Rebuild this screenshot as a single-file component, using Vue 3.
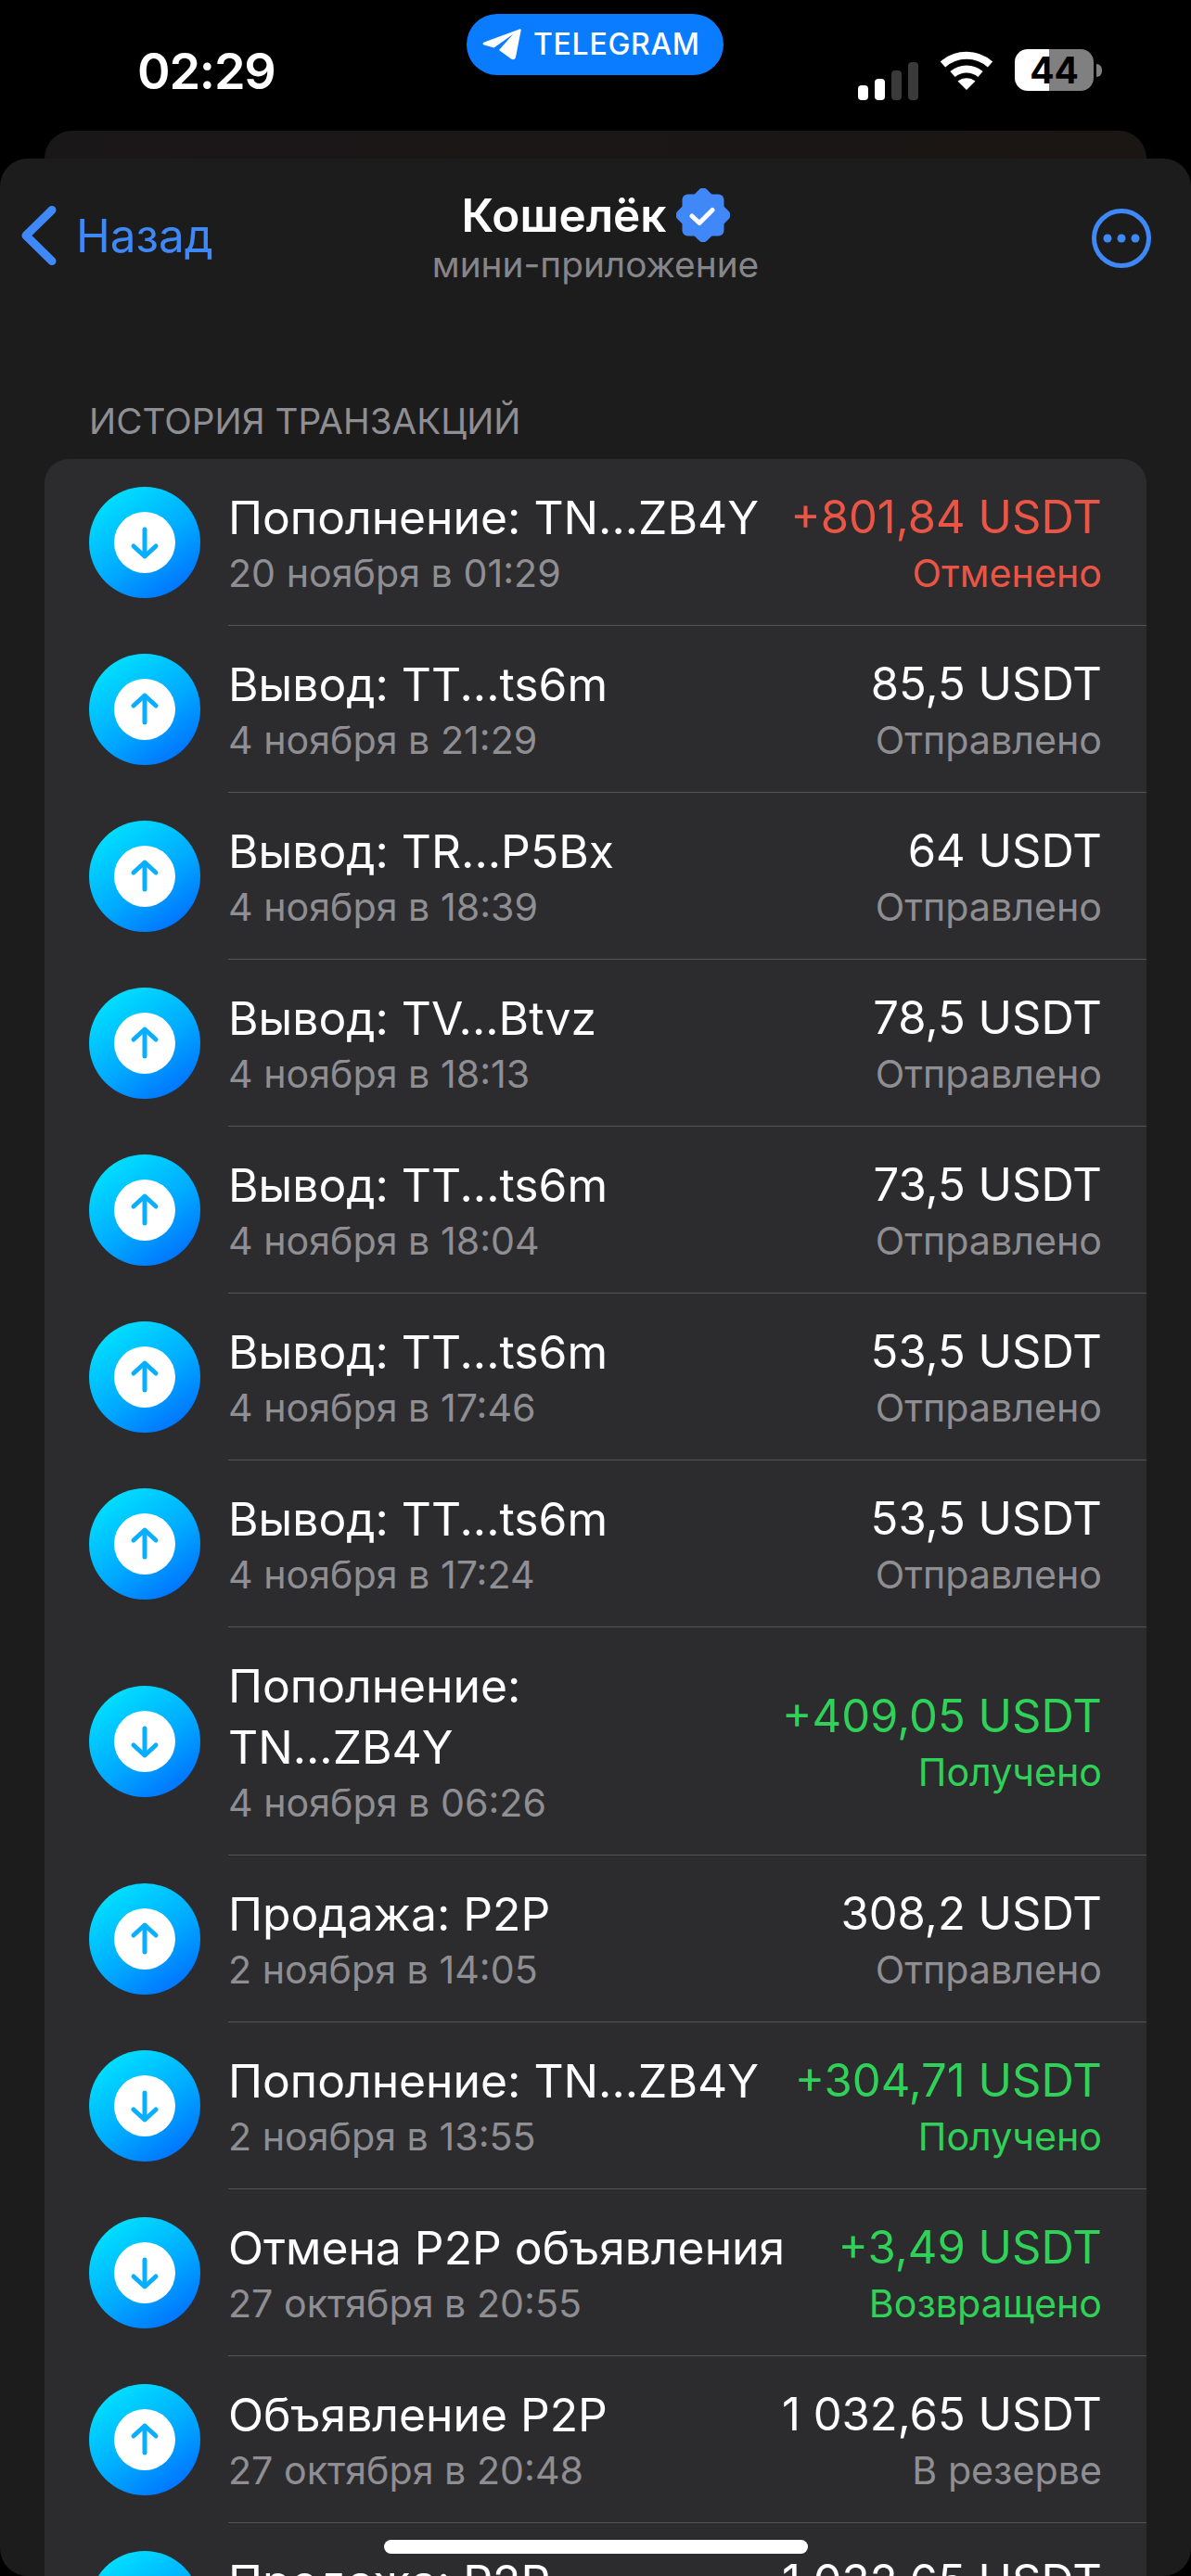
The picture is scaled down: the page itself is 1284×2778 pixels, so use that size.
<script setup>
const rows = [
  { dir: 'down', title: 'Пополнение: TN...ZB4Y', date: '20 ноября в 01:29', amount: '+801,84 USDT', status: 'Отменено', tone: 'red' },
  { dir: 'up', title: 'Вывод: TT...ts6m', date: '4 ноября в 21:29', amount: '85,5 USDT', status: 'Отправлено', tone: '' },
  { dir: 'up', title: 'Вывод: TR...P5Bx', date: '4 ноября в 18:39', amount: '64 USDT', status: 'Отправлено', tone: '' },
  { dir: 'up', title: 'Вывод: TV...Btvz', date: '4 ноября в 18:13', amount: '78,5 USDT', status: 'Отправлено', tone: '' },
  { dir: 'up', title: 'Вывод: TT...ts6m', date: '4 ноября в 18:04', amount: '73,5 USDT', status: 'Отправлено', tone: '' },
  { dir: 'up', title: 'Вывод: TT...ts6m', date: '4 ноября в 17:46', amount: '53,5 USDT', status: 'Отправлено', tone: '' },
  { dir: 'up', title: 'Вывод: TT...ts6m', date: '4 ноября в 17:24', amount: '53,5 USDT', status: 'Отправлено', tone: '' },
  { dir: 'down', title: 'Пополнение:\nTN...ZB4Y', date: '4 ноября в 06:26', amount: '+409,05 USDT', status: 'Получено', tone: 'green' },
  { dir: 'up', title: 'Продажа: P2P', date: '2 ноября в 14:05', amount: '308,2 USDT', status: 'Отправлено', tone: '' },
  { dir: 'down', title: 'Пополнение: TN...ZB4Y', date: '2 ноября в 13:55', amount: '+304,71 USDT', status: 'Получено', tone: 'green' },
  { dir: 'down', title: 'Отмена P2P объявления', date: '27 октября в 20:55', amount: '+3,49 USDT', status: 'Возвращено', tone: 'green' },
  { dir: 'up', title: 'Объявление P2P', date: '27 октября в 20:48', amount: '1 032,65 USDT', status: 'В резерве', tone: '' },
  { dir: 'up', title: 'Продажа: P2P', date: '27 октября в 20:47', amount: '1 032,65 USDT', status: 'Отправлено', tone: '' },
]
</script>

<template>
  <div class="screen">
    <header class="status">
      <div class="time">02:29</div>
      <div class="pill">
        <svg class="plane" width="44" height="36" viewBox="0 0 44 36">
          <path d="M41 1.5 3 15.5 C1 16.4 1.2 18 3 18.5 L13.5 21.5 34 7 19 24 32 33.5 C34.5 35 36.4 34 37 31.5 L42.5 3.5 C42.9 1.6 42.4 1 41 1.5Z" fill="#fff"/>
        </svg>
        <span class="pill-text">TELEGRAM</span>
      </div>
      <div class="indicators">
        <svg class="signal" width="65" height="41" viewBox="0 0 65 41">
          <rect x="0" y="25" width="11" height="16" rx="4" fill="#fff"/>
          <rect x="18" y="18" width="11" height="23" rx="4" fill="#fff"/>
          <rect x="36" y="9" width="11" height="32" rx="4" fill="#3a3a3a"/>
          <rect x="54" y="0" width="11" height="41" rx="4" fill="#3a3a3a"/>
        </svg>
        <svg class="wifi" width="58" height="43" viewBox="0 0 58 43">
          <path d="M3.5 15.5 C18 2.5 40 2.5 54.5 15.5" fill="none" stroke="#fff" stroke-width="8"/>
          <path d="M14 26 C22.5 18.5 35.5 18.5 44 26" fill="none" stroke="#fff" stroke-width="8"/>
          <path d="M19.5 33.5 C25 29 33 29 38.5 33.5 L29 43Z" fill="#fff"/>
        </svg>
        <div class="battery"><span>44</span></div>
        <div class="nub"></div>
      </div>
    </header>

    <div class="sheet-back"></div>

    <main class="sheet">
      <nav class="nav">
        <div class="back">
          <svg width="44" height="70" viewBox="0 0 44 70">
            <path d="M36 7.5 8 35 36 62.500" fill="none" stroke="#3f88f7" stroke-width="9" stroke-linecap="round" stroke-linejoin="round"/>
          </svg>
          <span class="back-text">Назад</span>
        </div>
        <div class="heading">
          <div class="title-line">
            <span class="title">Кошелёк</span>
            <svg class="badge" width="58" height="58" viewBox="0 0 58 58">
              <rect x="6.500" y="6.500" width="45" height="45" rx="6" fill="#4088f8"/>
              <rect x="6.500" y="6.500" width="45" height="45" rx="6" fill="#4088f8" transform="rotate(45 29 29)"/>
              <path d="M17 30 25 37.500 39 23.500" fill="none" stroke="#fff" stroke-width="5" stroke-linecap="round" stroke-linejoin="round"/>
            </svg>
          </div>
          <div class="subtitle">мини-приложение</div>
        </div>
        <div class="more">
          <svg width="64" height="64" viewBox="0 0 64 64">
            <circle cx="32" cy="32" r="29.500" fill="none" stroke="#3f88f7" stroke-width="5"/>
            <circle cx="17" cy="32" r="4.500" fill="#3f88f7"/>
            <circle cx="32" cy="32" r="4.500" fill="#3f88f7"/>
            <circle cx="47" cy="32" r="4.500" fill="#3f88f7"/>
          </svg>
        </div>
      </nav>

      <h2 class="section">ИСТОРИЯ ТРАНЗАКЦИЙ</h2>

      <section class="card">
        <article v-for="(row, i) in rows" :key="i" class="row">
          <div class="avatar">
            <div class="disc">
              <svg width="66" height="66" viewBox="0 0 66 66">
                <g v-if="row.dir === 'down'" fill="none" stroke="#0aaeff" stroke-width="5" stroke-linecap="round" stroke-linejoin="round">
                  <path d="M33 19V47"/>
                  <path d="M21 37 33 48 45 37"/>
                </g>
                <g v-else fill="none" stroke="#0aaeff" stroke-width="5" stroke-linecap="round" stroke-linejoin="round">
                  <path d="M33 47V19"/>
                  <path d="M21 29 33 18 45 29"/>
                </g>
              </svg>
            </div>
          </div>
          <div class="body">
            <div class="left">
              <div class="row-title">{{ row.title }}</div>
              <div class="muted">{{ row.date }}</div>
            </div>
            <div class="right">
              <div class="amount" :class="row.tone">{{ row.amount }}</div>
              <div class="muted" :class="row.tone">{{ row.status }}</div>
            </div>
          </div>
        </article>
      </section>

      <div class="home"></div>
    </main>
  </div>
</template>

<style scoped>
.screen {
  width: 1284px;
  height: 2778px;
  background: #000;
  display: flex;
  flex-direction: column;
  overflow: hidden;
  font-family: Inter, "Liberation Sans", sans-serif;
  color: #fff;
}
.status {
  height: 141px;
  flex: none;
  display: grid;
  grid-template-columns: 503px 277px 1fr;
  align-items: start;
}
.time {
  padding: 47px 0 0 148px;
  font-size: 54px;
  line-height: 60px;
  font-weight: 600;
  letter-spacing: -1.2px;
}
.pill {
  margin-top: 15px;
  height: 66px;
  border-radius: 33px;
  background: #0a7cff;
  display: flex;
  align-items: center;
  padding-left: 16px;
  gap: 12px;
}
.pill-text {
  font-size: 32px;
  line-height: 36px;
  font-weight: 500;
  letter-spacing: 0.7px;
}
.indicators {
  margin: 53px 0 0 145px;
  display: flex;
  align-items: flex-start;
}
.signal {
  margin-top: 14px;
  flex: none;
}
.wifi {
  margin: 1px 0 0 23px;
  flex: none;
}
.battery {
  width: 85px;
  height: 45px;
  margin-left: 23px;
  flex: none;
  border-radius: 14px;
  background: linear-gradient(to right, #fff 43.500%, #808080 43.500%);
  display: flex;
  align-items: center;
  justify-content: center;
  color: #000;
  font-size: 39px;
  line-height: 45px;
  font-weight: 700;
}
.nub {
  width: 6px;
  height: 14px;
  margin: 16px 0 0 3px;
  flex: none;
  border-radius: 0 7px 7px 0;
  background: #808080;
}
.sheet-back {
  height: 30px;
  flex: none;
  margin: 0 48px;
  border-radius: 30px 30px 0 0;
  background: linear-gradient(to right, #1a1719, #1b1613);
}
.sheet {
  flex: 1;
  position: relative;
  min-height: 0;
  overflow: hidden;
  border-radius: 30px;
  background: #1c1c1d;
}
.nav {
  margin-top: 30px;
  height: 106px;
  display: grid;
  grid-template-columns: 1fr auto 1fr;
  align-items: center;
}
.back {
  display: flex;
  align-items: center;
  padding-left: 20px;
  gap: 18px;
  color: #3f88f7;
}
.back-text {
  font-size: 49.500px;
  line-height: 64px;
}
.heading {
  display: flex;
  flex-direction: column;
  align-items: center;
}
.title-line {
  height: 62px;
  display: flex;
  align-items: center;
  gap: 10px;
}
.title {
  font-size: 49.500px;
  line-height: 62px;
  font-weight: 600;
}
.subtitle {
  font-size: 38.800px;
  line-height: 44px;
  color: #86868a;
}
.more {
  display: flex;
  justify-content: flex-end;
  padding: 6px 43px 0 0;
}
.section {
  margin: 125px 0 19px 96px;
  font-size: 38.700px;
  line-height: 44px;
  font-weight: 400;
  color: #8e8e93;
}
.card {
  margin: 0 48px;
  border-radius: 26px;
  background: #2c2c2e;
  overflow: hidden;
}
.row {
  display: flex;
  align-items: center;
  padding-left: 48px;
}
.avatar {
  width: 120px;
  height: 120px;
  flex: none;
  margin-right: 30px;
  border-radius: 50%;
  background: linear-gradient(145deg, #00e8ff 5%, #00aaff 55%, #0068ff 95%);
  display: flex;
  align-items: center;
  justify-content: center;
}
.disc {
  width: 66px;
  height: 66px;
  border-radius: 50%;
  background: #fff;
}
.disc svg {
  display: block;
}
.body {
  flex: 1;
  min-width: 0;
  display: flex;
  justify-content: space-between;
  align-items: center;
  padding: 30px 48px 29px 0;
  border-bottom: 1px solid #545456;
}
.left {
  min-width: 0;
}
.right {
  text-align: right;
  white-space: nowrap;
}
.row-title {
  font-size: 49.800px;
  line-height: 66px;
  white-space: pre-line;
}
.amount {
  font-size: 49px;
  line-height: 66px;
}
.muted {
  font-size: 41.200px;
  line-height: 54px;
  color: #8e8e93;
}
.amount.red,
.muted.red {
  color: #eb5545;
}
.amount.green,
.muted.green {
  color: #30d158;
}
.home {
  position: absolute;
  left: 414px;
  bottom: 24px;
  width: 457px;
  height: 15px;
  border-radius: 8px;
  background: #fff;
}
</style>

<style>
html,
body {
  background: #000;
}
</style>
